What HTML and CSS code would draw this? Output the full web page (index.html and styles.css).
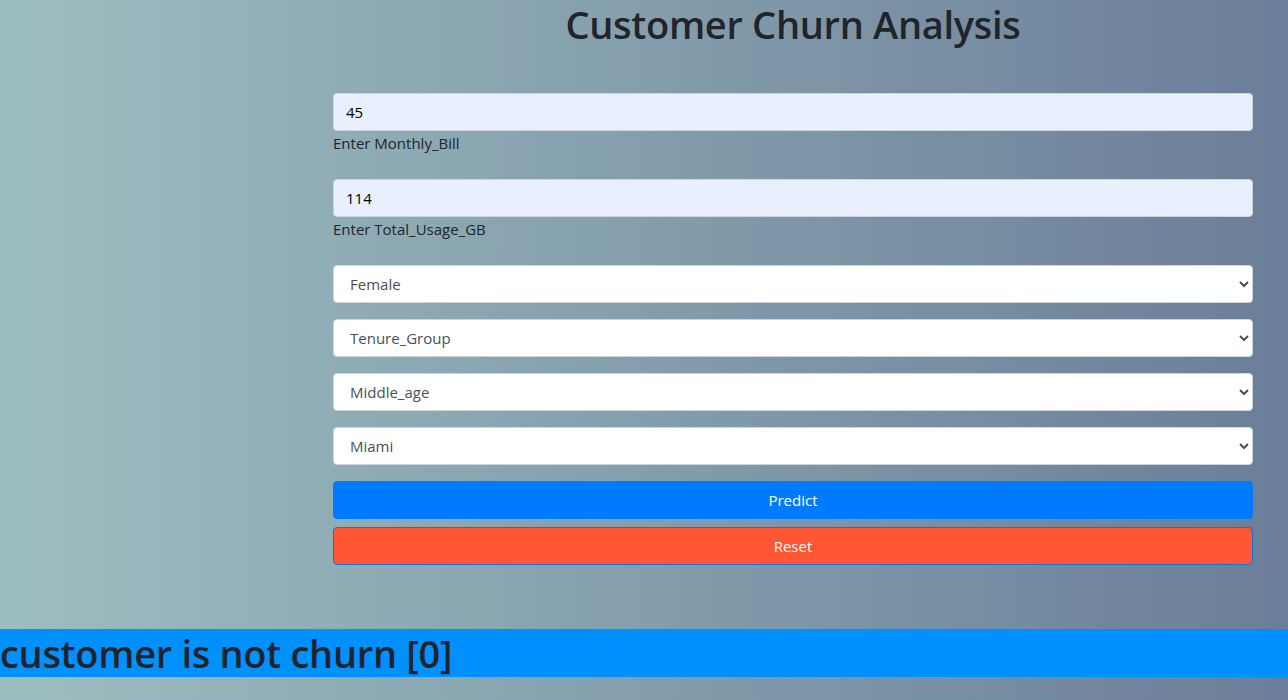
FILE: index.html
```html
<!DOCTYPE html>
<html lang="en">
<head>
<meta charset="utf-8">
<title>Customer Churn Analysis</title>
<link rel="stylesheet" href="styles.css">
</head>
<body>
<div class="page">
  <div class="col">
    <h1 class="title">Customer Churn Analysis</h1>
    <form class="form">
      <div class="group">
        <input class="field filled" type="text" value="45">
        <label class="label">Enter Monthly_Bill</label>
      </div>
      <div class="group">
        <input class="field filled" type="text" value="114">
        <label class="label">Enter Total_Usage_GB</label>
      </div>
      <div class="selects">
        <select class="field sel"><option>Female</option><option>Male</option></select>
        <select class="field sel"><option>Tenure_Group</option></select>
        <select class="field sel"><option>Middle_age</option></select>
        <select class="field sel"><option>Miami</option></select>
      </div>
      <div class="buttons">
        <button type="button" class="btn predict">Predict</button>
        <button type="button" class="btn reset">Reset</button>
      </div>
    </form>
  </div>
</div>
<h1 class="result">customer is not churn [0]</h1>
</body>
</html>
```
FILE: styles.css
```css
html, body {
  margin: 0;
  padding: 0;
}
body {
  min-height: 700px;
  background: linear-gradient(to right, #9dbec0 0%, #6b7e99 100%);
  font-family: "Open Sans", "Noto Sans", sans-serif;
  color: #212529;
  font-size: 16px;
}
.page {
  display: flex;
  padding-left: 333px;
}
.col {
  width: 920px;
}
.title {
  margin: 0;
  font-size: 38px;
  line-height: 48px;
  font-weight: 600;
  text-align: center;
  color: #212529;
  letter-spacing: -0.3px;
}
.form {
  margin-top: 45px;
  display: flex;
  flex-direction: column;
}
.group {
  display: flex;
  flex-direction: column;
  margin-bottom: 24px;
}
.field {
  box-sizing: border-box;
  width: 100%;
  height: 38px;
  border: 1px solid #ced4da;
  border-radius: 4px;
  font-family: inherit;
  font-size: 15px;
  color: #495057;
  padding: 0 12px;
  margin: 0;
}
.filled {
  background: #e8f0fe;
  color: #000;
}
.label {
  line-height: 24px;
  font-size: 15px;
  color: #212529;
}
.selects {
  display: flex;
  flex-direction: column;
  gap: 16px;
}
.sel {
  background-color: #fff;
  padding-left: 12px;
}
.buttons {
  margin-top: 16px;
  display: flex;
  flex-direction: column;
  gap: 8px;
}
.btn {
  box-sizing: border-box;
  height: 38px;
  width: 100%;
  border-radius: 4px;
  font-family: inherit;
  font-size: 15px;
  color: #fff;
  cursor: pointer;
}
.predict {
  background: #007bff;
  border: 1px solid #007bff;
}
.reset {
  background: #ff5733;
  border: 1px solid #1a6fe0;
}
.result {
  margin: 64px 0 0 0;
  background: #0091ff;
  font-size: 38px;
  line-height: 48px;
  font-weight: 600;
  color: #212529;
  letter-spacing: -0.3px;
}
```
